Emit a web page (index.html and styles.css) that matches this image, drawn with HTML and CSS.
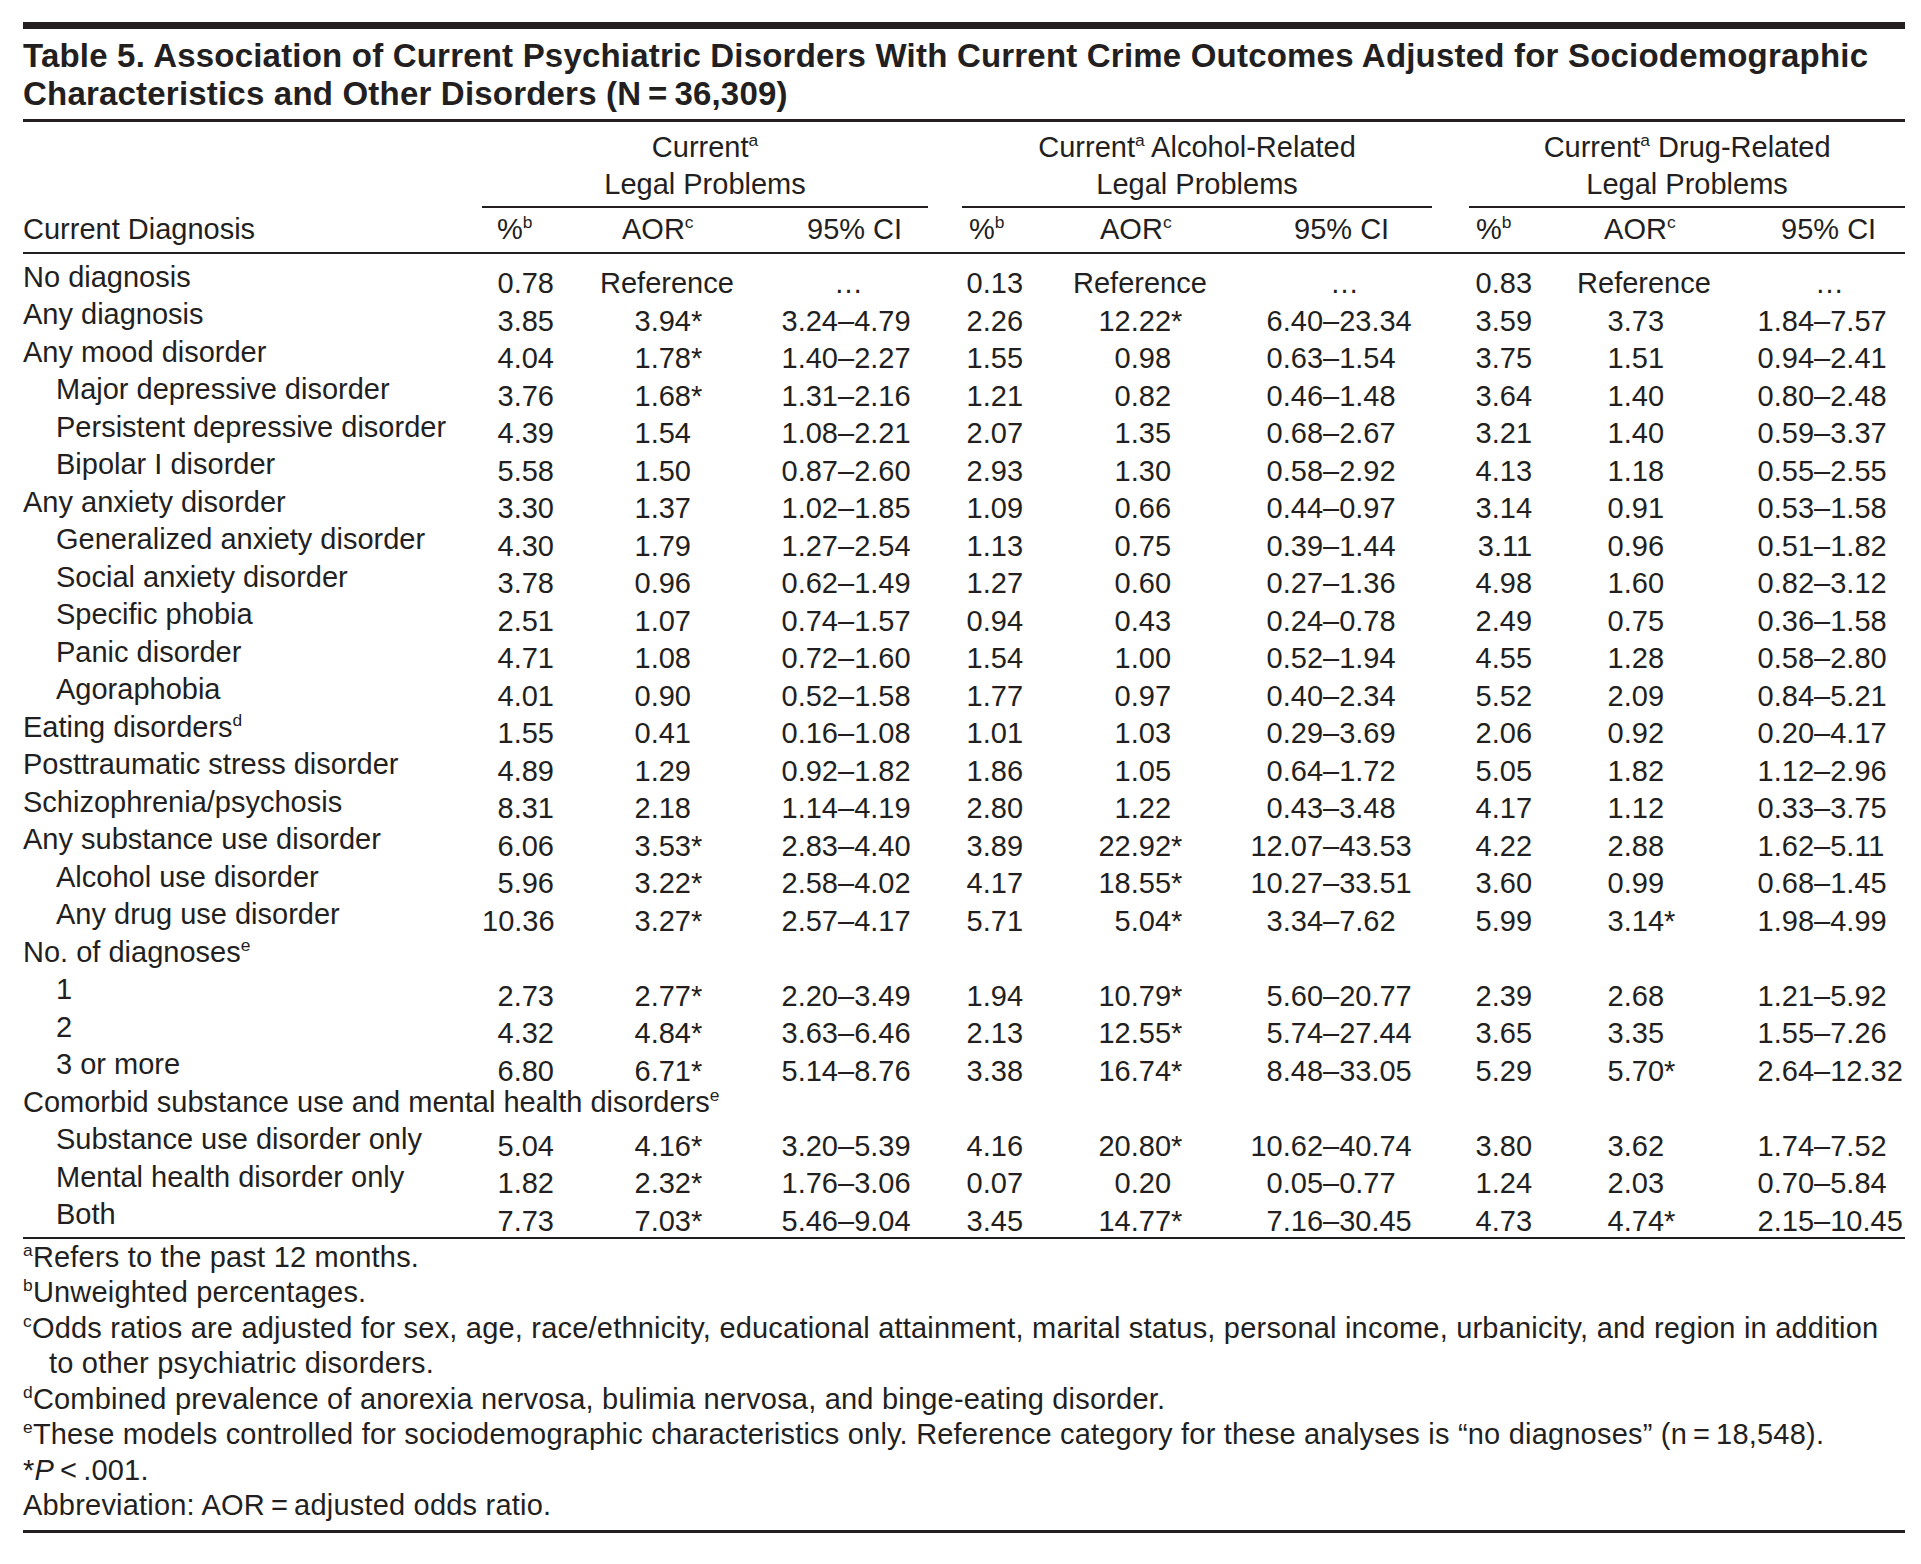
FILE: index.html
```html
<!DOCTYPE html>
<html lang="en">
<head>
<meta charset="utf-8">
<title>Table 5</title>
<link rel="stylesheet" href="styles.css">
</head>
<body>
<div class="page">
  <div class="topbar"></div>
  <h1 class="title">Table 5. Association of Current Psychiatric Disorders With Current Crime Outcomes Adjusted for Sociodemographic<br>Characteristics and Other Disorders (N&#8201;=&#8201;36,309)</h1>
  <table class="t">
    <colgroup>
      <col class="w-l"><col class="w-1p"><col class="w-1a"><col class="w-1c"><col class="w-gap1">
      <col class="w-2p"><col class="w-2a"><col class="w-2c"><col class="w-gap2">
      <col class="w-3p"><col class="w-3a"><col class="w-3c">
    </colgroup>
    <thead>
      <tr class="grp">
        <th></th>
        <th colspan="3" class="gh">Current<sup>a</sup><br>Legal Problems</th>
        <th></th>
        <th colspan="3" class="gh">Current<sup>a</sup> Alcohol-Related<br>Legal Problems</th>
        <th></th>
        <th colspan="3" class="gh">Current<sup>a</sup> Drug-Related<br>Legal Problems</th>
      </tr>
      <tr class="sub">
        <th class="l">Current Diagnosis</th>
        <th>%<sup>b</sup></th><th>AOR<sup>c</sup></th><th>95% CI</th><th></th>
        <th>%<sup>b</sup></th><th>AOR<sup>c</sup></th><th>95% CI</th><th></th>
        <th>%<sup>b</sup></th><th>AOR<sup>c</sup></th><th>95% CI</th>
      </tr>
    </thead>
    <tbody>
      <tr><td class="l">No diagnosis</td><td>0.78</td><td class="ref">Reference</td><td class="ell">…</td><td></td><td>0.13</td><td class="ref">Reference</td><td class="ell">…</td><td></td><td>0.83</td><td class="ref">Reference</td><td class="ell">…</td></tr>
      <tr><td class="l">Any diagnosis</td><td>3.85</td><td><span class="n">3.94</span><span class="s">*</span></td><td><span class="lo">3.24</span>–4.79</td><td></td><td>2.26</td><td><span class="n">12.22</span><span class="s">*</span></td><td><span class="lo">6.40</span>–23.34</td><td></td><td>3.59</td><td><span class="n">3.73</span></td><td><span class="lo">1.84</span>–7.57</td></tr>
      <tr><td class="l">Any mood disorder</td><td>4.04</td><td><span class="n">1.78</span><span class="s">*</span></td><td><span class="lo">1.40</span>–2.27</td><td></td><td>1.55</td><td><span class="n">0.98</span></td><td><span class="lo">0.63</span>–1.54</td><td></td><td>3.75</td><td><span class="n">1.51</span></td><td><span class="lo">0.94</span>–2.41</td></tr>
      <tr><td class="l in">Major depressive disorder</td><td>3.76</td><td><span class="n">1.68</span><span class="s">*</span></td><td><span class="lo">1.31</span>–2.16</td><td></td><td>1.21</td><td><span class="n">0.82</span></td><td><span class="lo">0.46</span>–1.48</td><td></td><td>3.64</td><td><span class="n">1.40</span></td><td><span class="lo">0.80</span>–2.48</td></tr>
      <tr><td class="l in">Persistent depressive disorder</td><td>4.39</td><td><span class="n">1.54</span></td><td><span class="lo">1.08</span>–2.21</td><td></td><td>2.07</td><td><span class="n">1.35</span></td><td><span class="lo">0.68</span>–2.67</td><td></td><td>3.21</td><td><span class="n">1.40</span></td><td><span class="lo">0.59</span>–3.37</td></tr>
      <tr><td class="l in">Bipolar I disorder</td><td>5.58</td><td><span class="n">1.50</span></td><td><span class="lo">0.87</span>–2.60</td><td></td><td>2.93</td><td><span class="n">1.30</span></td><td><span class="lo">0.58</span>–2.92</td><td></td><td>4.13</td><td><span class="n">1.18</span></td><td><span class="lo">0.55</span>–2.55</td></tr>
      <tr><td class="l">Any anxiety disorder</td><td>3.30</td><td><span class="n">1.37</span></td><td><span class="lo">1.02</span>–1.85</td><td></td><td>1.09</td><td><span class="n">0.66</span></td><td><span class="lo">0.44</span>–0.97</td><td></td><td>3.14</td><td><span class="n">0.91</span></td><td><span class="lo">0.53</span>–1.58</td></tr>
      <tr><td class="l in">Generalized anxiety disorder</td><td>4.30</td><td><span class="n">1.79</span></td><td><span class="lo">1.27</span>–2.54</td><td></td><td>1.13</td><td><span class="n">0.75</span></td><td><span class="lo">0.39</span>–1.44</td><td></td><td>3.11</td><td><span class="n">0.96</span></td><td><span class="lo">0.51</span>–1.82</td></tr>
      <tr><td class="l in">Social anxiety disorder</td><td>3.78</td><td><span class="n">0.96</span></td><td><span class="lo">0.62</span>–1.49</td><td></td><td>1.27</td><td><span class="n">0.60</span></td><td><span class="lo">0.27</span>–1.36</td><td></td><td>4.98</td><td><span class="n">1.60</span></td><td><span class="lo">0.82</span>–3.12</td></tr>
      <tr><td class="l in">Specific phobia</td><td>2.51</td><td><span class="n">1.07</span></td><td><span class="lo">0.74</span>–1.57</td><td></td><td>0.94</td><td><span class="n">0.43</span></td><td><span class="lo">0.24</span>–0.78</td><td></td><td>2.49</td><td><span class="n">0.75</span></td><td><span class="lo">0.36</span>–1.58</td></tr>
      <tr><td class="l in">Panic disorder</td><td>4.71</td><td><span class="n">1.08</span></td><td><span class="lo">0.72</span>–1.60</td><td></td><td>1.54</td><td><span class="n">1.00</span></td><td><span class="lo">0.52</span>–1.94</td><td></td><td>4.55</td><td><span class="n">1.28</span></td><td><span class="lo">0.58</span>–2.80</td></tr>
      <tr><td class="l in">Agoraphobia</td><td>4.01</td><td><span class="n">0.90</span></td><td><span class="lo">0.52</span>–1.58</td><td></td><td>1.77</td><td><span class="n">0.97</span></td><td><span class="lo">0.40</span>–2.34</td><td></td><td>5.52</td><td><span class="n">2.09</span></td><td><span class="lo">0.84</span>–5.21</td></tr>
      <tr><td class="l">Eating disorders<sup>d</sup></td><td>1.55</td><td><span class="n">0.41</span></td><td><span class="lo">0.16</span>–1.08</td><td></td><td>1.01</td><td><span class="n">1.03</span></td><td><span class="lo">0.29</span>–3.69</td><td></td><td>2.06</td><td><span class="n">0.92</span></td><td><span class="lo">0.20</span>–4.17</td></tr>
      <tr><td class="l">Posttraumatic stress disorder</td><td>4.89</td><td><span class="n">1.29</span></td><td><span class="lo">0.92</span>–1.82</td><td></td><td>1.86</td><td><span class="n">1.05</span></td><td><span class="lo">0.64</span>–1.72</td><td></td><td>5.05</td><td><span class="n">1.82</span></td><td><span class="lo">1.12</span>–2.96</td></tr>
      <tr><td class="l">Schizophrenia/psychosis</td><td>8.31</td><td><span class="n">2.18</span></td><td><span class="lo">1.14</span>–4.19</td><td></td><td>2.80</td><td><span class="n">1.22</span></td><td><span class="lo">0.43</span>–3.48</td><td></td><td>4.17</td><td><span class="n">1.12</span></td><td><span class="lo">0.33</span>–3.75</td></tr>
      <tr><td class="l">Any substance use disorder</td><td>6.06</td><td><span class="n">3.53</span><span class="s">*</span></td><td><span class="lo">2.83</span>–4.40</td><td></td><td>3.89</td><td><span class="n">22.92</span><span class="s">*</span></td><td><span class="lo">12.07</span>–43.53</td><td></td><td>4.22</td><td><span class="n">2.88</span></td><td><span class="lo">1.62</span>–5.11</td></tr>
      <tr><td class="l in">Alcohol use disorder</td><td>5.96</td><td><span class="n">3.22</span><span class="s">*</span></td><td><span class="lo">2.58</span>–4.02</td><td></td><td>4.17</td><td><span class="n">18.55</span><span class="s">*</span></td><td><span class="lo">10.27</span>–33.51</td><td></td><td>3.60</td><td><span class="n">0.99</span></td><td><span class="lo">0.68</span>–1.45</td></tr>
      <tr><td class="l in">Any drug use disorder</td><td>10.36</td><td><span class="n">3.27</span><span class="s">*</span></td><td><span class="lo">2.57</span>–4.17</td><td></td><td>5.71</td><td><span class="n">5.04</span><span class="s">*</span></td><td><span class="lo">3.34</span>–7.62</td><td></td><td>5.99</td><td><span class="n">3.14</span><span class="s">*</span></td><td><span class="lo">1.98</span>–4.99</td></tr>
      <tr><td class="l" colspan="12">No. of diagnoses<sup>e</sup></td></tr>
      <tr><td class="l in">1</td><td>2.73</td><td><span class="n">2.77</span><span class="s">*</span></td><td><span class="lo">2.20</span>–3.49</td><td></td><td>1.94</td><td><span class="n">10.79</span><span class="s">*</span></td><td><span class="lo">5.60</span>–20.77</td><td></td><td>2.39</td><td><span class="n">2.68</span></td><td><span class="lo">1.21</span>–5.92</td></tr>
      <tr><td class="l in">2</td><td>4.32</td><td><span class="n">4.84</span><span class="s">*</span></td><td><span class="lo">3.63</span>–6.46</td><td></td><td>2.13</td><td><span class="n">12.55</span><span class="s">*</span></td><td><span class="lo">5.74</span>–27.44</td><td></td><td>3.65</td><td><span class="n">3.35</span></td><td><span class="lo">1.55</span>–7.26</td></tr>
      <tr><td class="l in">3 or more</td><td>6.80</td><td><span class="n">6.71</span><span class="s">*</span></td><td><span class="lo">5.14</span>–8.76</td><td></td><td>3.38</td><td><span class="n">16.74</span><span class="s">*</span></td><td><span class="lo">8.48</span>–33.05</td><td></td><td>5.29</td><td><span class="n">5.70</span><span class="s">*</span></td><td><span class="lo">2.64</span>–12.32</td></tr>
      <tr><td class="l" colspan="12">Comorbid substance use and mental health disorders<sup>e</sup></td></tr>
      <tr><td class="l in">Substance use disorder only</td><td>5.04</td><td><span class="n">4.16</span><span class="s">*</span></td><td><span class="lo">3.20</span>–5.39</td><td></td><td>4.16</td><td><span class="n">20.80</span><span class="s">*</span></td><td><span class="lo">10.62</span>–40.74</td><td></td><td>3.80</td><td><span class="n">3.62</span></td><td><span class="lo">1.74</span>–7.52</td></tr>
      <tr><td class="l in">Mental health disorder only</td><td>1.82</td><td><span class="n">2.32</span><span class="s">*</span></td><td><span class="lo">1.76</span>–3.06</td><td></td><td>0.07</td><td><span class="n">0.20</span></td><td><span class="lo">0.05</span>–0.77</td><td></td><td>1.24</td><td><span class="n">2.03</span></td><td><span class="lo">0.70</span>–5.84</td></tr>
      <tr><td class="l in">Both</td><td>7.73</td><td><span class="n">7.03</span><span class="s">*</span></td><td><span class="lo">5.46</span>–9.04</td><td></td><td>3.45</td><td><span class="n">14.77</span><span class="s">*</span></td><td><span class="lo">7.16</span>–30.45</td><td></td><td>4.73</td><td><span class="n">4.74</span><span class="s">*</span></td><td><span class="lo">2.15</span>–10.45</td></tr>
    </tbody>
  </table>
  <div class="notes">
    <p><sup>a</sup>Refers to the past 12 months.</p>
    <p><sup>b</sup>Unweighted percentages.</p>
    <p class="hang"><sup>c</sup>Odds ratios are adjusted for sex, age, race/ethnicity, educational attainment, marital status, personal income, urbanicity, and region in addition<br>to other psychiatric disorders.</p>
    <p><sup>d</sup>Combined prevalence of anorexia nervosa, bulimia nervosa, and binge-eating disorder.</p>
    <p><sup>e</sup>These models controlled for sociodemographic characteristics only. Reference category for these analyses is “no diagnoses” (n&#8201;=&#8201;18,548).</p>
    <p><span class="ast">*</span><i>P</i>&#8201;&lt;&#8201;.001.</p>
    <p>Abbreviation: AOR&#8201;=&#8201;adjusted odds ratio.</p>
  </div>
</div>
</body>
</html>
```

FILE: styles.css
```css
html, body {
  margin: 0;
  padding: 0;
  background: #ffffff;
}

body {
  color: #231f20;
  font-family: "Liberation Sans", Arial, sans-serif;
  font-size: 29px;
}

.page {
  padding: 22px 16px 0 23px;
  width: 1882px;
}

.topbar {
  height: 7px;
  background: #231f20;
}

.title {
  margin: 8px 0 0;
  padding-bottom: 6px;
  border-bottom: 3px solid #231f20;
  font-family: "Liberation Sans", Arial, sans-serif;
  font-weight: bold;
  font-size: 33px;
  line-height: 38px;
  letter-spacing: 0.2px;
  white-space: nowrap;
}

sup {
  font-size: 0.6em;
  line-height: 0;
  vertical-align: 0.62em;
}

.t {
  width: 1882px;
  table-layout: fixed;
  border-collapse: separate;
  border-spacing: 0;
}

.w-l { width: 459px; }
.w-1p { width: 98px; }
.w-1a { width: 155px; }
.w-1c { width: 193px; }
.w-gap1 { width: 34px; }
.w-2p { width: 88px; }
.w-2a { width: 165px; }
.w-2c { width: 217px; }
.w-gap2 { width: 37px; }
.w-3p { width: 91px; }
.w-3a { width: 160px; }
.w-3c { width: 185px; }

.t th, .t td {
  padding: 0;
  font-weight: normal;
  white-space: nowrap;
  text-align: left;
}

.grp th {
  padding: 7px 0 3px;
  line-height: 37px;
  vertical-align: top;
}

.grp th.gh {
  text-align: center;
  border-bottom: 2px solid #231f20;
}

.sub th {
  padding: 3px 0 4px;
  line-height: 37px;
  border-bottom: 2px solid #231f20;
}

.sub th:nth-child(2) { padding-left: 15px; }
.sub th:nth-child(3) { padding-left: 42px; }
.sub th:nth-child(4) { padding-left: 72px; }
.sub th:nth-child(6) { padding-left: 7px; }
.sub th:nth-child(7) { padding-left: 50px; }
.sub th:nth-child(8) { padding-left: 79px; }
.sub th:nth-child(10) { padding-left: 7px; }
.sub th:nth-child(11) { padding-left: 44px; }
.sub th:nth-child(12) { padding-left: 61px; }

.t tbody td {
  height: 37.5px;
  line-height: 31px;
  vertical-align: bottom;
}

.t tbody td.l {
  vertical-align: top;
}

.t tbody td.in {
  padding-left: 33px;
}

.t tbody tr:first-child td {
  padding-top: 7.5px;
}

.t tbody tr:last-child td {
  border-bottom: 2px solid #231f20;
}

.t tbody td:nth-child(2) { text-align: right; padding-right: 26px; }
.t tbody td:nth-child(6) { text-align: right; padding-right: 27px; }
.t tbody td:nth-child(10) { text-align: right; padding-right: 28px; }

.t tbody td:nth-child(3) { padding-left: 31px; }
.t tbody td:nth-child(7) { padding-left: 41px; }
.t tbody td:nth-child(11) { padding-left: 24px; }
.t tbody td:nth-child(3).ref { padding-left: 20px; }
.t tbody td:nth-child(7).ref { padding-left: 23px; }
.t tbody td:nth-child(11).ref { padding-left: 17px; }

.t tbody td:nth-child(4) { padding-left: 23px; }
.t tbody td:nth-child(8) { padding-left: 28px; }
.t tbody td:nth-child(12) { padding-left: 14px; }
.t tbody td:nth-child(4).ell { padding-left: 99px; }
.t tbody td:nth-child(8).ell { padding-left: 115px; }
.t tbody td:nth-child(12).ell { padding-left: 95px; }

.n {
  display: inline-block;
  width: 80px;
  text-align: right;
}

.s {
  font-size: 1em;
}

.lo {
  display: inline-block;
  width: 80px;
  text-align: right;
}

.notes {
  padding-top: 1px;
  padding-bottom: 6px;
  border-bottom: 3px solid #231f20;
}

.notes p {
  margin: 0;
  line-height: 35.5px;
  white-space: nowrap;
  letter-spacing: 0.2px;
}

.notes p.hang {
  padding-left: 26px;
  text-indent: -26px;
}
```
